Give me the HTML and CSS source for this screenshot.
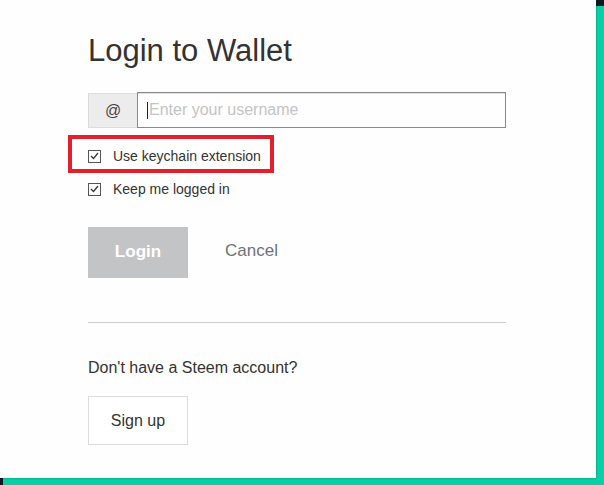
FILE: index.html
```html
<!DOCTYPE html>
<html>
<head>
<meta charset="utf-8">
<link rel="stylesheet" href="styles.css">
</head>
<body>
<div class="frame">
  <div class="panel">
    <div class="content">
      <h1 class="title">Login to Wallet</h1>
      <div class="input-group">
        <span class="addon">@</span>
        <div class="field"><span class="caret"></span><span class="placeholder">Enter your username</span></div>
      </div>
      <div class="checks">
        <label class="check highlight"><span class="box"><svg width="9" height="8" viewBox="0 0 9 8"><path d="M1 4 L3.5 6.5 L8 1" fill="none" stroke="#333" stroke-width="1.2"/></svg></span>Use keychain extension</label>
        <label class="check"><span class="box"><svg width="9" height="8" viewBox="0 0 9 8"><path d="M1 4 L3.5 6.5 L8 1" fill="none" stroke="#333" stroke-width="1.2"/></svg></span>Keep me logged in</label>
      </div>
      <div class="actions">
        <button class="btn-login">Login</button>
        <button class="btn-cancel">Cancel</button>
      </div>
      <hr class="divider">
      <p class="signup-text">Don't have a Steem account?</p>
      <button class="btn-signup">Sign up</button>
    </div>
  </div>
</div>
</body>
</html>
```
FILE: styles.css
```css
html, body {
  margin: 0;
  padding: 0;
}
body {
  width: 604px;
  height: 485px;
  overflow: hidden;
  background: #0d1a1f;
  font-family: "Liberation Sans", Arial, sans-serif;
}
.frame {
  position: relative;
  width: 604px;
  height: 485px;
}
.frame::before {
  content: "";
  position: absolute;
  left: 3px;
  top: 6px;
  right: 0;
  bottom: 0;
  background: #08d1a8;
}
.panel {
  position: relative;
  width: 596px;
  height: 478px;
  background: #fefefe;
  box-shadow: 1px 1px 2px rgba(0,0,0,0.15);
  box-sizing: border-box;
  padding-left: 88px;
}
.content {
  width: 418px;
  display: flex;
  flex-direction: column;
  align-items: flex-start;
}
.title {
  margin: 34px 0 0;
  font-size: 31px;
  font-weight: normal;
  color: #333;
  line-height: 34px;
  height: 34px;
}
.input-group {
  margin-top: 24px;
  display: flex;
  width: 418px;
  height: 36px;
}
.addon {
  width: 49px;
  height: 35px;
  margin-top: 1px;
  box-sizing: border-box;
  background: #ececec;
  border: 1px solid #dcdcdc;
  border-right: none;
  display: flex;
  align-items: center;
  justify-content: center;
  font-size: 16px;
  color: #444;
}
.field {
  flex: 1;
  box-sizing: border-box;
  border: 1px solid #8a8a8a;
  box-shadow: inset 0 1px 0 #ddd;
  display: flex;
  align-items: center;
  padding-left: 9px;
}
.caret {
  width: 1px;
  height: 17px;
  background: #222;
  margin-right: 1px;
}
.placeholder {
  font-size: 16px;
  color: #c4c4c4;
}
.checks {
  margin-top: 18px;
  display: flex;
  flex-direction: column;
  gap: 13px;
}
.check {
  position: relative;
  display: flex;
  align-items: center;
  font-size: 14px;
  color: #333;
  height: 20px;
}
.box {
  width: 11px;
  height: 11px;
  border: 1px solid #555;
  margin-right: 12px;
  display: flex;
  align-items: center;
  justify-content: center;
  background: #fff;
}
.highlight::after {
  content: "";
  position: absolute;
  left: -20px;
  top: -11px;
  width: 206px;
  height: 38px;
  box-sizing: border-box;
  border: 4px solid #e21f2b;
}
.actions {
  margin-top: 28px;
  display: flex;
  align-items: center;
}
button {
  font-family: "Liberation Sans", Arial, sans-serif;
  cursor: pointer;
}
.btn-login {
  width: 100px;
  height: 51px;
  background: #c3c4c5;
  border: none;
  color: #fff;
  font-weight: bold;
  font-size: 17px;
  padding: 0 0 2px;
}
.btn-cancel {
  margin-left: 37px;
  background: none;
  border: none;
  color: #6f7375;
  font-size: 17px;
  padding: 0 0 3px;
}
.divider {
  margin: 44px 0 0;
  width: 418px;
  border: none;
  border-top: 1px solid #cfcfcf;
  height: 0;
}
.signup-text {
  margin: 35px 0 0;
  font-size: 16px;
  color: #333;
  line-height: 20px;
}
.btn-signup {
  margin-top: 18px;
  width: 100px;
  height: 49px;
  background: #fff;
  border: 1px solid #dcdcdc;
  color: #333;
  font-size: 16px;
  padding: 0;
}
```
